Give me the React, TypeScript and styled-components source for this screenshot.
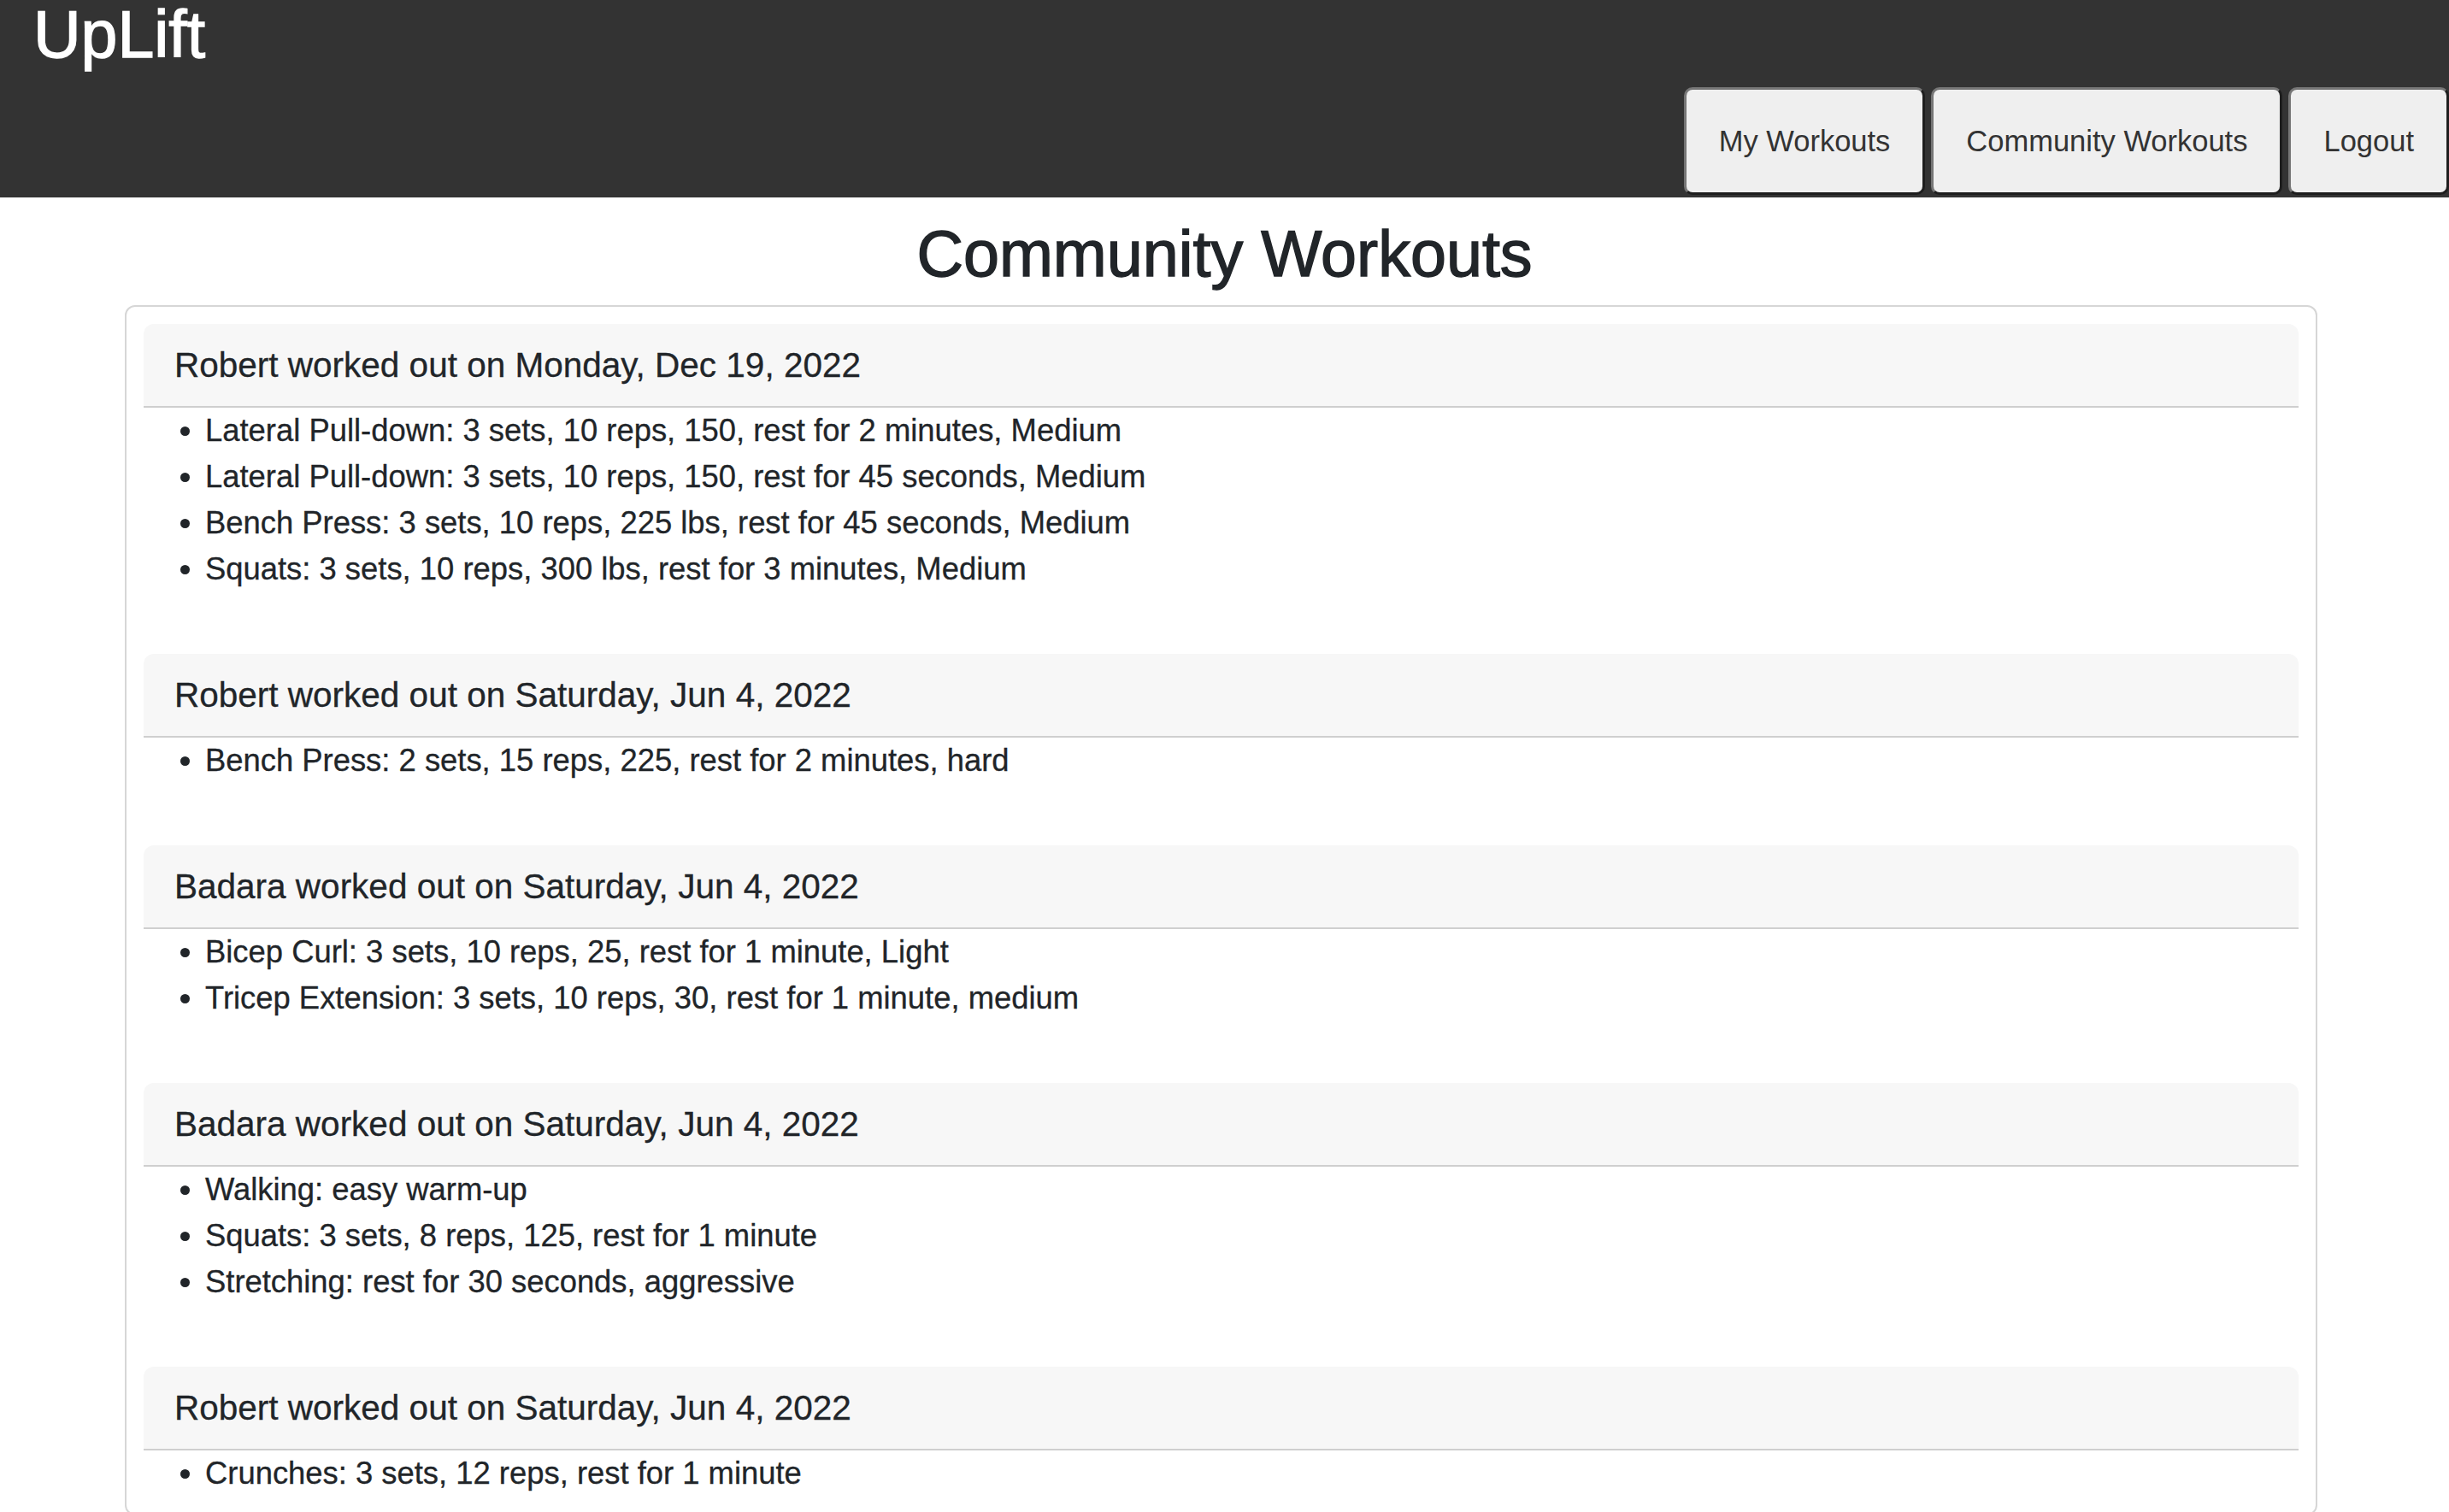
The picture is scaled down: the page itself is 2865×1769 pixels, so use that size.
import React from "react";
import styled, { createGlobalStyle } from "styled-components";

const GlobalStyle = createGlobalStyle`
  html, body {
    margin: 0;
    padding: 0;
    background: #ffffff;
    font-family: "Liberation Sans", Arial, Helvetica, sans-serif;
    color: #212529;
  }
  * { box-sizing: border-box; }
`;

const TopBar = styled.header`
  height: 231px;
  background: #333333;
  display: flex;
  flex-direction: column;
`;

const Brand = styled.h1`
  margin: 0;
  padding: 2px 0 0 39px;
  font-size: 77px;
  line-height: 1;
  font-weight: 500;
  color: #ffffff;
  -webkit-text-stroke: 1.4px #ffffff;
`;

const Nav = styled.nav`
  margin-top: auto;
  margin-bottom: 3px;
  display: flex;
  justify-content: flex-end;
  gap: 7px;
`;

const NavButton = styled.button`
  height: 126px;
  padding: 0 38px;
  background: #efefef;
  color: #333333;
  font-family: "Liberation Sans", Arial, Helvetica, sans-serif;
  font-size: 34.5px;
  border-style: solid;
  border-width: 3px;
  border-color: #767676 #1e1e1e #1e1e1e #767676;
  border-radius: 10px;
  cursor: pointer;
`;

const PageTitle = styled.h2`
  margin: 21px 0 14px;
  text-align: center;
  font-size: 75.5px;
  line-height: 1.2;
  font-weight: 500;
  color: #212529;
  -webkit-text-stroke: 1.4px #212529;
`;

const FeedCard = styled.section`
  margin-left: 146px;
  width: 2565px;
  border: 2px solid #d6d6d6;
  border-radius: 12px;
  padding: 20px;
  display: flex;
  flex-direction: column;
  gap: 72px;
`;

const WorkoutCard = styled.article`
  background: #ffffff;
  border-radius: 12px;
`;

const WorkoutHeader = styled.div`
  background: #f7f7f7;
  border-bottom: 2px solid #cfcfcf;
  border-radius: 12px 12px 0 0;
  padding: 18px 36px 18px;
  font-size: 40.5px;
  line-height: 60px;
  color: #212529;
  -webkit-text-stroke: 0.3px #212529;
`;

const ExerciseList = styled.ul`
  margin: 0;
  padding: 0 0 0 72px;
`;

const Exercise = styled.li`
  font-size: 36.4px;
  line-height: 54px;
  color: #212529;
  -webkit-text-stroke: 0.3px #212529;
`;

type Workout = { who: string; date: string; items: string[] };

const workouts: Workout[] = [
  {
    who: "Robert",
    date: "Monday, Dec 19, 2022",
    items: [
      "Lateral Pull-down: 3 sets, 10 reps, 150, rest for 2 minutes, Medium",
      "Lateral Pull-down: 3 sets, 10 reps, 150, rest for 45 seconds, Medium",
      "Bench Press: 3 sets, 10 reps, 225 lbs, rest for 45 seconds, Medium",
      "Squats: 3 sets, 10 reps, 300 lbs, rest for 3 minutes, Medium",
    ],
  },
  {
    who: "Robert",
    date: "Saturday, Jun 4, 2022",
    items: ["Bench Press: 2 sets, 15 reps, 225, rest for 2 minutes, hard"],
  },
  {
    who: "Badara",
    date: "Saturday, Jun 4, 2022",
    items: [
      "Bicep Curl: 3 sets, 10 reps, 25, rest for 1 minute, Light",
      "Tricep Extension: 3 sets, 10 reps, 30, rest for 1 minute, medium",
    ],
  },
  {
    who: "Badara",
    date: "Saturday, Jun 4, 2022",
    items: [
      "Walking: easy warm-up",
      "Squats: 3 sets, 8 reps, 125, rest for 1 minute",
      "Stretching: rest for 30 seconds, aggressive",
    ],
  },
  {
    who: "Robert",
    date: "Saturday, Jun 4, 2022",
    items: ["Crunches: 3 sets, 12 reps, rest for 1 minute"],
  },
];

export default function App() {
  return (
    <>
      <GlobalStyle />
      <TopBar>
        <Brand>UpLift</Brand>
        <Nav>
          <NavButton>My Workouts</NavButton>
          <NavButton>Community Workouts</NavButton>
          <NavButton>Logout</NavButton>
        </Nav>
      </TopBar>
      <PageTitle>Community Workouts</PageTitle>
      <FeedCard>
        {workouts.map((w, i) => (
          <WorkoutCard key={i}>
            <WorkoutHeader>
              {w.who} worked out on {w.date}
            </WorkoutHeader>
            <ExerciseList>
              {w.items.map((it, j) => (
                <Exercise key={j}>{it}</Exercise>
              ))}
            </ExerciseList>
          </WorkoutCard>
        ))}
      </FeedCard>
    </>
  );
}
